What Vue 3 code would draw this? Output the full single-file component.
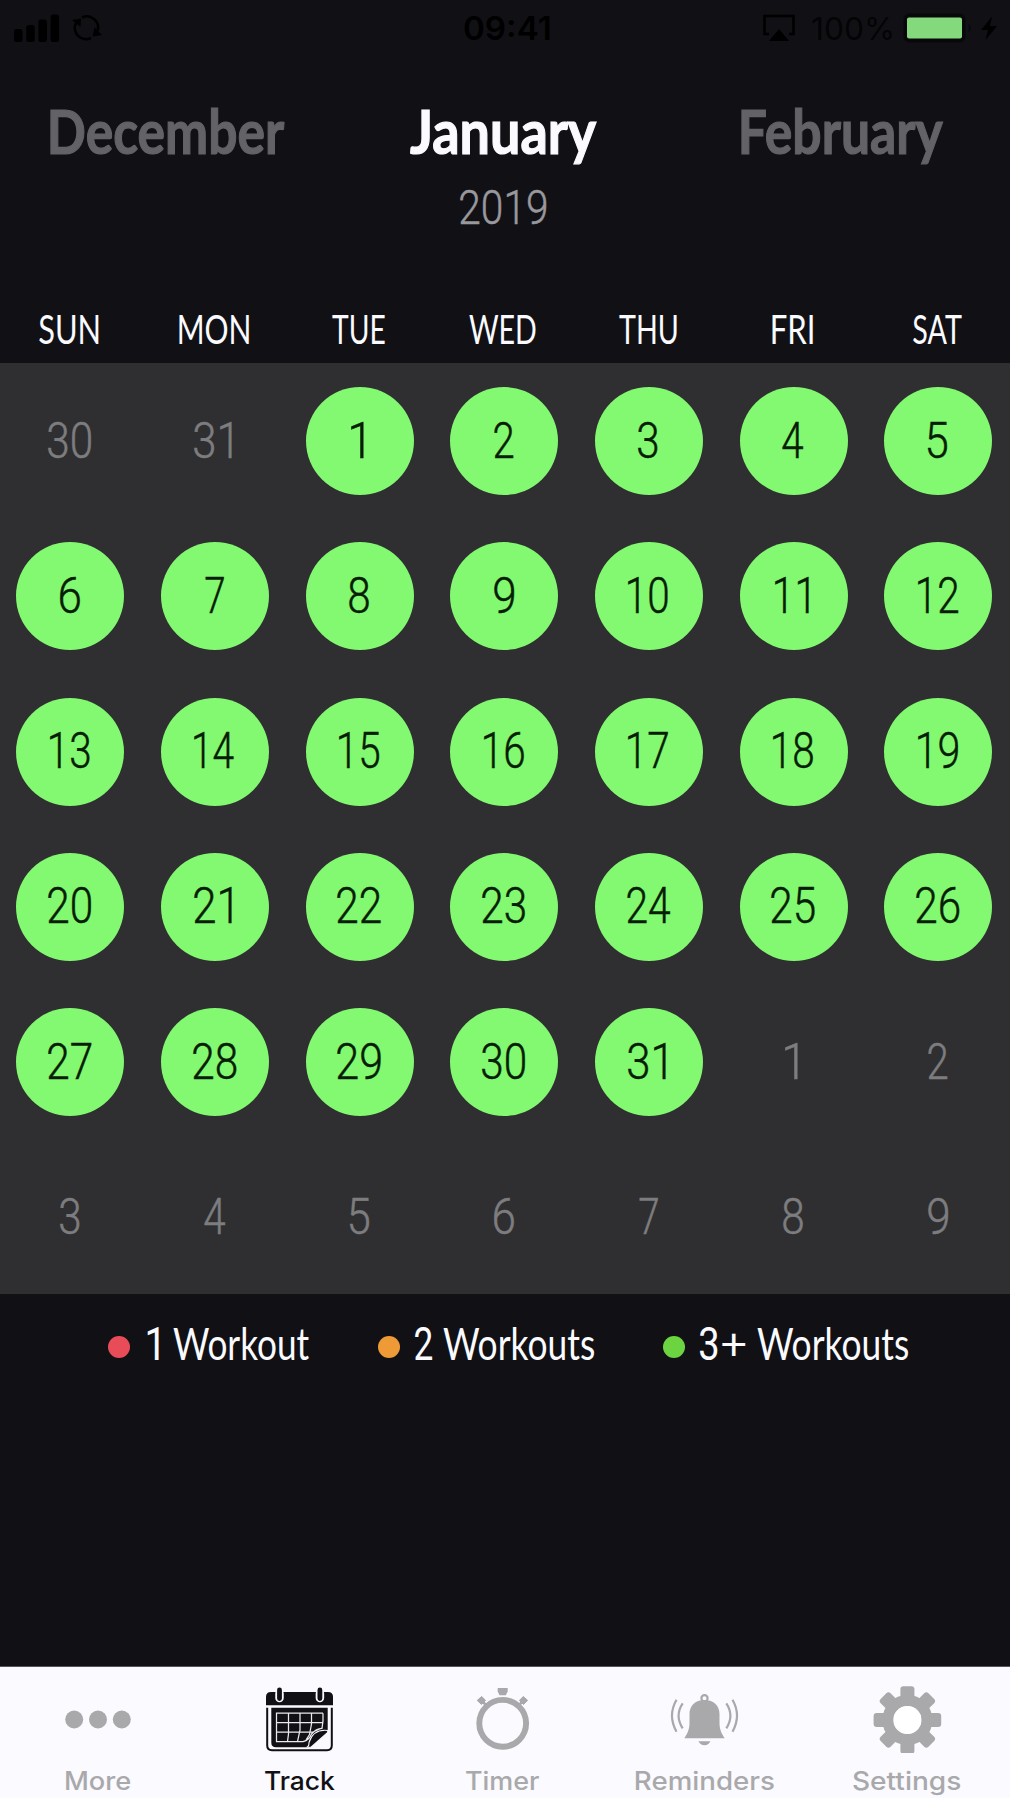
<script setup>
import { h } from 'vue'

const context = document.createElement('canvas').getContext('2d')

// Condensed text: the glyph run is squeezed to the given ink width,
// and the box is exactly as tall as the capitals.
function Fit(props) {
  const { text, w, cap, weight = 400, face = 'Lato' } = props
  const ratio = { Lato: 0.7165, Roboto: 0.711, Inter: 0.727 }[face]
  const size = cap / ratio
  const family = `"${face}", "Liberation Sans", sans-serif`
  context.font = `${weight} ${size}px ${family}`
  const m = context.measureText(text)
  const scale = w / (m.actualBoundingBoxLeft + m.actualBoundingBoxRight)
  return h('svg', { width: w, height: cap, style: { overflow: 'visible', display: 'block', flex: 'none' } }, [
    h('text', {
      transform: `translate(${m.actualBoundingBoxLeft * scale} ${cap}) scale(${scale} 1)`,
      'font-size': size,
      'font-family': family,
      'font-weight': weight,
      fill: 'currentColor',
    }, text),
  ])
}
Fit.props = ['text', 'w', 'cap', 'weight', 'face']

const weekdays = [
  ['SUN', 59.5], ['MON', 70], ['TUE', 53], ['WED', 67], ['THU', 57.5], ['FRI', 41], ['SAT', 48.5],
]

const digitWidth = { 1: 13, 2: 19, 3: 20, 4: 21.5, 5: 19, 6: 20, 7: 19, 8: 20, 9: 20 }
function inkWidth(n) {
  if (n < 10) return digitWidth[n]
  if (n === 11) return 34
  if (n === 21 || n === 31) return 38
  return n < 20 ? 40 : 43.5
}
const days = Array.from({ length: 42 }, (_, i) => {
  if (i < 2) return { n: 30 + i, on: false }
  if (i < 33) return { n: i - 1, on: true }
  return { n: i - 32, on: false }
})
const endsInOne = (n) => n % 10 === 1
</script>

<template>
  <main class="screen">
    <div class="status">
      <svg class="signal" width="46" height="29" viewBox="14 13 46 29">
        <rect x="14" y="28" width="8.5" height="13" rx="2.5" />
        <rect x="26.2" y="24" width="8.5" height="17" rx="2.5" />
        <rect x="38.4" y="18.500" width="8.5" height="22.500" rx="2.5" />
        <rect x="50.6" y="13.500" width="8.5" height="27.500" rx="2.5" />
      </svg>
      <svg class="sync" width="30" height="28" viewBox="72 13 30 28">
        <path d="M82 16.500A11.200 11.200 0 0 1 97.500 30M91 37A11.200 11.200 0 0 1 76 22" fill="none" stroke="#000" stroke-width="2.600" />
        <path d="M72 19l9-1.500-.5 8.500zM102 34l-9.500 1.500 2-9z" />
      </svg>
      <Fit class="time" text="09:41" :w="86" :cap="23.5" :weight="600" face="Inter" />
      <svg class="airplay" width="32" height="28" viewBox="763 14 32 28">
        <path d="M769 34H764.500V16H793.500V34H789" fill="none" stroke="#000" stroke-width="2.600" />
        <path d="M779 29L789 41H769Z" />
      </svg>
      <Fit class="percent" text="100%" :w="80" :cap="23" :weight="400" face="Inter" />
      <svg class="battery" width="95" height="30" viewBox="903 12.500 95 30">
        <rect x="903.500" y="13" width="62" height="29" rx="6" fill="#08080a" />
        <rect x="907" y="17" width="55" height="21" rx="2" fill="#84d97c" />
        <path d="M968.500 23q5 4.500 0 9z" fill="#08080f" />
        <path d="M992 16L981 29.500H988L985.500 39.500 997 25.500H990Z" />
      </svg>
    </div>

    <header class="months">
      <Fit class="dim" text="December" :w="233" :cap="44.5" :weight="700" />
      <Fit text="January" :w="186.5" :cap="44.5" :weight="700" />
      <Fit class="dim" text="February" :w="201" :cap="44.5" :weight="700" />
    </header>
    <div class="year"><Fit text="2019" :w="86" :cap="34.5" :weight="300" face="Roboto" /></div>

    <div class="weekdays">
      <div v-for="[name, w] in weekdays" :key="name"><Fit :text="name" :w="w" :cap="28.5" /></div>
    </div>

    <section class="panel">
      <div class="grid">
        <div v-for="(d, i) in days" :key="i" class="cell">
          <div class="day" :class="{ on: d.on, narrow: endsInOne(d.n) }">
            <Fit :text="String(d.n)" :w="inkWidth(d.n)" :cap="36" :weight="300" face="Roboto" />
          </div>
        </div>
      </div>
    </section>

    <div class="legend">
      <div class="entry one"><i></i><Fit text="1" :w="12" :cap="32.500" face="Roboto" /><Fit class="word" text="Workout" :w="136" :cap="32.5" /></div>
      <div class="entry two"><i></i><Fit text="2" :w="17" :cap="32.500" face="Roboto" /><Fit class="word" text="Workouts" :w="151" :cap="32.5" /></div>
      <div class="entry three"><i></i><Fit text="3" :w="17.5" :cap="32.500" face="Roboto" /><Fit class="plus" text="+" :w="24" :cap="32.5" /><Fit class="word" text="Workouts" :w="151" :cap="32.5" /></div>
    </div>

    <nav class="tabs">
      <div class="tab">
        <svg width="80" height="72"><circle cx="16.200" cy="38.500" r="9" /><circle cx="40" cy="38.500" r="9" /><circle cx="63.800" cy="38.500" r="9" /></svg>
        <Fit text="More" :w="64" :cap="18.700" :weight="450" face="Inter" />
      </div>
      <div class="tab active">
        <svg width="80" height="72">
          <path d="M6 24.300V16q0-5 5-5H68q5 0 5 5V24.300Z" />
          <path d="M7.200 26.700V64.500Q7.200 69.200 12 69.200H67Q71.800 69.200 71.800 64.500V26.700" fill="none" stroke="#111115" stroke-width="2" />
          <path d="M11.300 26.700H67.700V50.500L49.500 66.200H16Q11.300 66.200 11.300 61.500Z" />
          <path d="M49 61.500Q49 66 46.500 66.200H51L67.700 51.500V49.500C59 48.500 52 52 49 61.500Z" stroke="#fafaff" stroke-width="1.100" />
          <path d="M63 32.200H16.500V60.700H43Q49.500 59 51.500 53Q56 47.500 62 47.300Q63.500 40 63 32.200M16.500 41.700H63M16.500 51.200H52.500L62 47M28.500 32.200V53L27.500 60.700M40 32.200V49L37.500 60.700M51.500 32.200V43L49.500 53.500L46 59" fill="none" stroke="#e9e9f0" stroke-width="1.250" />
          <path d="M19.500 12.500V17M59.900 12.500V17" fill="none" stroke="#fafaff" stroke-width="8.500" stroke-linecap="round" />
          <path d="M19.500 9V17.500M59.900 9V17.500" fill="none" stroke="#111115" stroke-width="4.800" stroke-linecap="round" />
        </svg>
        <Fit text="Track" :w="70.5" :cap="18.700" :weight="500" face="Inter" />
      </div>
      <div class="tab">
        <svg width="80" height="72">
          <circle cx="39.700" cy="42.300" r="23.400" fill="none" stroke="#a9a9ab" stroke-width="5.900" />
          <path d="M34.700 7H44.700V10.500L42.800 14.300H36.600L34.700 10.500Z" />
          <path d="M18.700 15.500L22.600 19.400 18.500 23.500 14.200 19.400ZM60.300 15.500L64.600 19.400 60.500 23.500 56.400 19.400Z" stroke="#a9a9ab" stroke-linejoin="round" />
          <path d="M19 20L24 25M60 20L55 25" stroke="#a9a9ab" stroke-width="2.500" />
        </svg>
        <Fit text="Timer" :w="73.5" :cap="18.700" :weight="450" face="Inter" />
      </div>
      <div class="tab">
        <svg width="80" height="72">
          <circle cx="39.500" cy="17.300" r="3.100" fill="none" stroke="#a9a9ab" stroke-width="2.200" />
          <path d="M39.500 19C49 19 54.500 25 54.500 33V42C54.500 49 57 53 59.700 57.300H19.300C22 53 24.500 49 24.500 42V33C24.500 25 30 19 39.500 19ZM33.500 60.200H45.400Q43.500 64.300 39.500 64.300T33.500 60.200Z" />
          <path d="M17.700 22.300Q9.500 34.500 17.700 47.300M11.500 18.800Q2.500 34.500 11.500 50.800M61.300 22.300Q69.500 34.500 61.300 47.300M67.500 18.800Q76.500 34.500 67.500 50.800" fill="none" stroke="#a9a9ab" stroke-width="2.200" />
        </svg>
        <Fit text="Reminders" :w="138" :cap="18.700" :weight="450" face="Inter" />
      </div>
      <div class="tab">
        <svg width="80" height="72">
          <circle cx="40.400" cy="39" r="19.500" fill="none" stroke="#a9a9ab" stroke-width="11" />
          <rect v-for="n in 8" :key="n" x="33.400" y="5.200" width="14" height="20" rx="3" :transform="`rotate(${n * 45} 40.400 39)`" />
          <circle cx="40.400" cy="39" r="14" fill="#fff" />
        </svg>
        <Fit text="Settings" :w="107.5" :cap="18.700" :weight="450" face="Inter" />
      </div>
    </nav>
  </main>
</template>

<style>
body {
  margin: 0;
  background: #111115;
}
</style>

<style scoped>
.screen {
  width: 1010px;
  height: 1798px;
  overflow: hidden;
  display: flex;
  flex-direction: column;
  background: #111115;
  color: #fafaff;
  font-family: Lato, "Liberation Sans", sans-serif;
}
.status {
  height: 56px;
  flex: none;
  display: flex;
  align-items: center;
  box-sizing: border-box;
  padding-left: 14px;
  color: #000;
}
.sync { margin-left: 12px; }
.time { margin-left: 362px; }
.airplay { margin-left: 213px; }
.percent { margin-left: 17px; color: #040405; }
.battery { margin-left: 11px; }
.months {
  display: grid;
  grid-template-columns: 359px 332px auto;
  padding: 53.300px 0 0 50.500px;
  stroke: currentColor;
  stroke-width: 1.200px;
}
.dim { color: #636267; }
.year {
  display: flex;
  justify-content: center;
  padding: 35.200px 4px 0 0;
  color: #99989d;
  stroke: currentColor;
  stroke-width: 0.500px;
}
.weekdays {
  display: grid;
  grid-template-columns: repeat(7, 144.700px);
  justify-items: center;
  margin: 92px 0 19px -3.500px;
}
.panel {
  height: 931px;
  flex: none;
  background: #2f2f31;
}
.grid {
  display: grid;
  grid-template-columns: repeat(7, 144.700px);
  grid-auto-rows: 155.200px;
  margin-left: -2.200px;
  padding-top: 0.600px;
}
.cell {
  display: grid;
  place-items: center;
}
.day {
  width: 108px;
  height: 108px;
  border-radius: 50%;
  display: flex;
  align-items: center;
  justify-content: center;
  box-sizing: border-box;
  padding: 0 1px 2.500px 0;
  color: #7d7d7f;
  stroke: currentColor;
  stroke-width: 0.500px;
}
.day.narrow { padding-right: 4px; }
.day.on {
  background: #82f970;
  color: #071d06;
}
.legend {
  display: flex;
  padding: 33.500px 0 0 108px;
}
.entry {
  display: flex;
  align-items: flex-end;
}
.entry i {
  width: 22px;
  height: 22px;
  border-radius: 50%;
  margin-bottom: 2.300px;
}
.one i { background: #e94c59; margin-right: 16.500px; }
.two i { background: #ed9a37; margin-right: 15px; }
.three i { background: #6dd441; margin-right: 15px; }
.one .word { margin-left: 14px; }
.two { margin-left: 69px; }
.two .word { margin-left: 11px; }
.three { margin-left: 69px; }
.three .plus { margin-left: 4.500px; }
.three .word { margin-left: 11.500px; }
.tabs {
  margin-top: auto;
  height: 131px;
  flex: none;
  display: grid;
  grid-template-columns: repeat(5, 202.300px);
  box-sizing: border-box;
  padding-top: 13.500px;
  background: #fafaff;
  box-shadow: 0 -1px #55555a;
}
.tab {
  display: flex;
  flex-direction: column;
  align-items: center;
  gap: 18.600px;
  margin-left: -6.300px;
  color: #a9a9ab;
  fill: #a9a9ab;
}
.tab.active {
  color: #111115;
  fill: #111115;
}
</style>
